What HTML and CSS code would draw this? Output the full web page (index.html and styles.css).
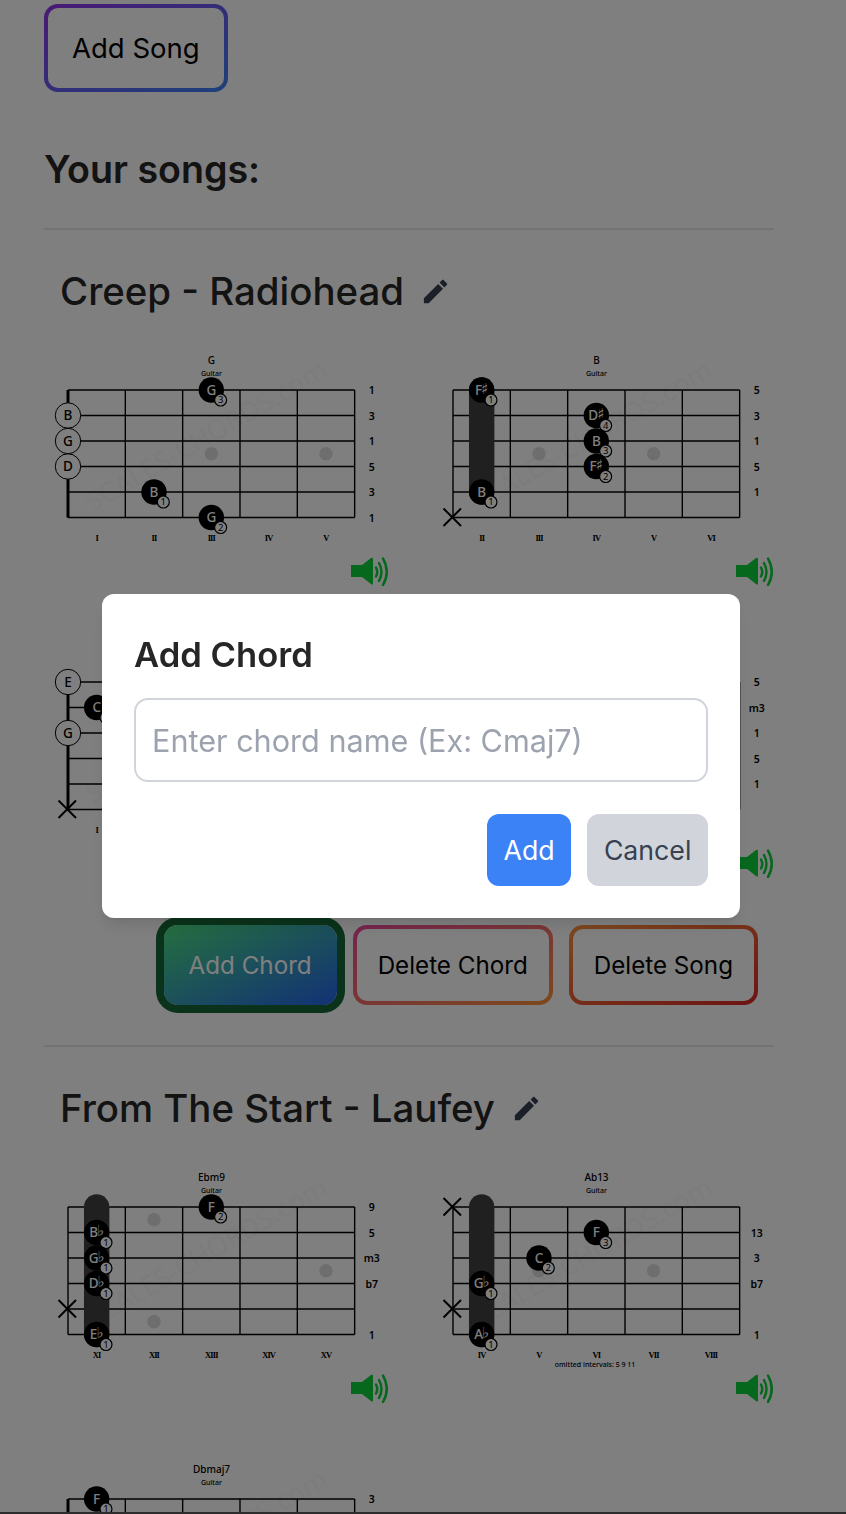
FILE: index.html
```html
<!DOCTYPE html>
<html lang="en">

<head>
    <meta charset="UTF-8">
    <meta name="viewport" content="width=device-width, initial-scale=1.0">
    <title>Chord Book</title>
    <link rel="stylesheet" href="styles.css">
</head>

<body>
    <main class="page">
        <a class="grad-btn add-song grad-purple" href="#"><span class="grad-inner">Add Song</span></a>
        <h1 class="songs-heading">Your songs:</h1>

        <section class="song">
            <hr class="divider">
            <div class="song-title">
                <h2>Creep - Radiohead</h2>
                <svg class="edit-icon" viewBox="0 0 24 24"><path d="M3 17.25V21h3.75L17.81 9.94l-3.75-3.75L3 17.25zM20.71 7.04c.39-.39.39-1.02 0-1.41l-2.34-2.34c-.39-.39-1.02-.39-1.41 0l-1.83 1.83 3.75 3.75 1.83-1.83z"/></svg>
            </div>
            <div class="chord-grid" data-song="creep"></div>
            <div class="song-actions">
                <a class="grad-btn grad-green is-active" href="#"><span class="grad-inner">Add Chord</span></a>
                <a class="grad-btn grad-pink" href="#"><span class="grad-inner">Delete Chord</span></a>
                <a class="grad-btn grad-orange" href="#"><span class="grad-inner">Delete Song</span></a>
            </div>
        </section>

        <section class="song">
            <hr class="divider">
            <div class="song-title">
                <h2>From The Start - Laufey</h2>
                <svg class="edit-icon" viewBox="0 0 24 24"><path d="M3 17.25V21h3.75L17.81 9.94l-3.75-3.75L3 17.25zM20.71 7.04c.39-.39.39-1.02 0-1.41l-2.34-2.34c-.39-.39-1.02-.39-1.41 0l-1.83 1.83 3.75 3.75 1.83-1.83z"/></svg>
            </div>
            <div class="chord-grid" data-song="start"></div>
        </section>
    </main>

    <div class="overlay">
        <form class="modal">
            <h3>Add Chord</h3>
            <input class="modal-input" type="text" placeholder="Enter chord name (Ex: Cmaj7)">
            <div class="modal-actions">
                <button class="btn-add" type="button">Add</button>
                <button class="btn-cancel" type="button">Cancel</button>
            </div>
        </form>
    </div>
    <div class="bottom-edge"></div>

    <script src="chords.js"></script>
</body>

</html>
```

FILE: styles.css
```css
* {
    padding: 0;
    margin: 0;
    box-sizing: border-box;
}

html,
body {
    height: 100%;
    overflow: hidden;
}

body {
    font-family: Inter, "Liberation Sans", sans-serif;
    color: #262626;
    background-color: #fff;
}

.page {
    width: 730px;
    margin-left: 44px;
    padding-top: 4px;
}

/* gradient outline buttons */
.grad-btn {
    display: inline-block;
    padding: 4px;
    border-radius: 14px;
    color: #000;
    text-decoration: none;
    font-size: 24.2px;
    line-height: 33px;
}

.grad-inner {
    display: block;
    padding: 20px 21px 19px;
    border-radius: 10px;
    background-color: #fff;
}

.grad-purple {
    background-image: linear-gradient(to bottom right, #9333ea, #3b82f6);
}

.grad-green {
    background-image: linear-gradient(to bottom right, #4ade80, #2563eb);
}

.grad-pink {
    background-image: linear-gradient(to bottom right, #ec4899, #fb923c);
}

.grad-orange {
    background-image: linear-gradient(to bottom right, #fb923c, #dc2626);
}

.is-active {
    box-shadow: 0 0 0 8px #166534;
    padding: 0;
    color: #fff;
}

.is-active .grad-inner {
    padding: 24px 25px 23px;
    background-color: transparent;
}

.add-song {
    font-size: 27.5px;
    line-height: 36px;
}

.add-song .grad-inner {
    padding: 22px 24px;
}

.songs-heading {
    font-size: 37.6px;
    line-height: 40px;
    font-weight: 600;
    margin-top: 58px;
    margin-bottom: 38px;
}

.divider {
    border: none;
    height: 2px;
    background-color: #e5e7eb;
}

.song-title {
    display: flex;
    align-items: center;
    gap: 16px;
    padding-left: 16px;
    margin-top: 41px;
}

.song-title h2 {
    font-size: 38.4px;
    line-height: 40px;
    font-weight: 500;
}

.edit-icon {
    width: 31px;
    height: 31px;
    fill: #374151;
}

.chord-grid {
    display: grid;
    grid-template-columns: 345px 345px;
    column-gap: 40px;
    row-gap: 50px;
    margin-top: 33px;
}

.chord {
    display: flex;
    flex-direction: column;
    align-items: flex-end;
}

.chord-svg {
    display: block;
    width: 345px;
    height: 212px;
}

.speaker {
    display: block;
    width: 38px;
    height: 30px;
}

.song-actions {
    display: flex;
    justify-content: flex-end;
    gap: 16px;
    padding-right: 16px;
    margin-top: 47px;
    margin-bottom: 40px;
}

/* chord diagram parts */
.grid-line {
    stroke: #000;
    stroke-width: 1.4;
}

.nut {
    stroke: #000;
    stroke-width: 3;
}

.inlay {
    fill: #dcdcdc;
}

.barre {
    fill: #404040;
}

.dot {
    fill: #000;
}

.dot-text {
    fill: #fff;
    font: 500 13.5px "Noto Sans", "DejaVu Sans", sans-serif;
    text-anchor: middle;
}

.accidental {
    font: 15px "DejaVu Sans", sans-serif;
}

.open-ring {
    fill: #fff;
    stroke: #000;
    stroke-width: 1;
}

.open-text {
    fill: #000;
    font: 500 13.5px "Noto Sans", "DejaVu Sans", sans-serif;
    text-anchor: middle;
}

.finger {
    fill: #fff;
    stroke: #000;
    stroke-width: 1.2;
}

.finger-text {
    fill: #000;
    font: 9.5px "Noto Sans", sans-serif;
    text-anchor: middle;
}

.mute {
    stroke: #000;
    stroke-width: 2;
}

.chord-name {
    fill: #000;
    font: 500 10px "Noto Sans", sans-serif;
    text-anchor: middle;
}

.chord-sub {
    fill: #000;
    font: 500 7px "Noto Sans", sans-serif;
    text-anchor: middle;
}

.interval {
    fill: #000;
    font: 600 10.5px "Noto Sans", sans-serif;
    text-anchor: middle;
}

.fret-num {
    fill: #000;
    font: 700 8.5px "Liberation Serif", serif;
    letter-spacing: -0.9px;
    text-anchor: middle;
}

.omitted {
    fill: #000;
    font: 500 7px "Noto Sans", sans-serif;
    text-anchor: middle;
}

.watermark {
    fill: #000;
    opacity: 0.025;
    font: 400 27px "Noto Sans", sans-serif;
    text-anchor: middle;
}

.speaker-body {
    fill: #0cd03a;
}

.speaker-wave {
    fill: none;
    stroke: #0cd03a;
    stroke-width: 2.5;
    stroke-linecap: round;
}

/* modal */
.overlay {
    position: fixed;
    top: 0;
    left: 0;
    right: 0;
    bottom: 0;
    display: flex;
    align-items: center;
    justify-content: center;
    padding-right: 4px;
    padding-bottom: 2px;
    background-color: rgba(0, 0, 0, 0.5);
}

.modal {
    width: 638px;
    height: 324px;
    padding: 32px;
    border-radius: 12px;
    background-color: #fff;
    box-shadow: 0 10px 15px -3px rgba(0, 0, 0, 0.1), 0 4px 6px -4px rgba(0, 0, 0, 0.1);
}

.modal h3 {
    font-size: 34.6px;
    line-height: 56px;
    font-weight: 600;
    margin-bottom: 16px;
}

.modal-input {
    display: block;
    width: 100%;
    height: 84px;
    padding: 0 16px;
    border: 2px solid #d1d5db;
    border-radius: 14px;
    font-family: inherit;
    font-size: 30.6px;
}

.modal-input::placeholder {
    color: #9ca3af;
}

.modal-actions {
    display: flex;
    justify-content: flex-end;
    gap: 16px;
    margin-top: 32px;
}

.modal-actions button {
    height: 72px;
    padding: 0 16.6px;
    border: none;
    border-radius: 12px;
    font-family: inherit;
    font-size: 26.7px;
}

.btn-add {
    background-color: #3b82f6;
    color: #fff;
}

.btn-cancel {
    background-color: #d1d5db;
    color: #374151;
}

.bottom-edge {
    position: fixed;
    left: 0;
    right: 0;
    bottom: 0;
    height: 2px;
    background-color: #2d2d2d;
}
```

FILE: chords.js
```js
// chord data, row 0 is the top line of the diagram
const songs = {
    creep: [
        {
            name: "G", start: 1, nut: true, labels: ["1", "3", "1", "5", "3", "1"],
            open: [[1, "B"], [2, "G"], [3, "D"]], mute: [],
            dots: [[0, 2, "G", 3], [4, 1, "B", 1], [5, 2, "G", 2]]
        },
        {
            name: "B", start: 2, labels: ["5", "3", "1", "5", "1", ""],
            open: [], mute: [5], barre: [0, 4, 0],
            dots: [[0, 0, "F♯", 1], [1, 2, "D♯", 4], [2, 2, "B", 3], [3, 2, "F♯", 2], [4, 0, "B", 1]]
        },
        {
            name: "C", start: 1, nut: true, labels: ["3", "1", "5", "3", "1", ""],
            open: [[0, "E"], [2, "G"]], mute: [5],
            dots: [[1, 0, "C", 1], [3, 1, "E", 2], [4, 2, "C", 3]]
        },
        {
            name: "Cm", start: 3, labels: ["5", "m3", "1", "5", "1", ""],
            open: [], mute: [5], barre: [0, 4, 0],
            dots: [[0, 0, "G", 1], [1, 1, "E♭", 2], [2, 2, "C", 4], [3, 2, "G", 3], [4, 0, "C", 1]]
        }
    ],
    start: [
        {
            name: "Ebm9", start: 11, labels: ["9", "5", "m3", "b7", "", "1"],
            open: [], mute: [4], barre: [0, 5, 0],
            dots: [[0, 2, "F", 2], [1, 0, "B♭", 1], [2, 0, "G♭", 1], [3, 0, "D♭", 1], [5, 0, "E♭", 1]]
        },
        {
            name: "Ab13", start: 4, labels: ["", "13", "3", "b7", "", "1"],
            open: [], mute: [0, 4], barre: [0, 5, 0], omitted: "omitted intervals: 5 9 11",
            dots: [[1, 2, "F", 3], [2, 1, "C", 2], [3, 0, "G♭", 1], [5, 0, "A♭", 1]]
        },
        {
            name: "Dbmaj7", start: 1, nut: true, labels: ["3", "", "", "", "", ""],
            open: [], mute: [], dots: [[0, 0, "F", 1]]
        }
    ]
};

const ROMAN = ["", "I", "II", "III", "IV", "V", "VI", "VII", "VIII", "IX", "X", "XI", "XII", "XIII", "XIV", "XV"];
const LEFT = 24, TOP = 46, FRET_W = 57.33, ROW_H = 25.5, DOT_R = 12.7;

function el(parent, tag, attrs, text) {
    let node = document.createElementNS("http://www.w3.org/2000/svg", tag);
    for (let key in attrs) {
        node.setAttribute(key, attrs[key]);
    }
    if (text) node.textContent = text;
    parent.appendChild(node);
    return node;
}

function rowY(r) {
    return TOP + r * ROW_H;
}

function fretX(f) {
    return LEFT + (f + 0.5) * FRET_W;
}

function drawInlays(svg, start) {
    for (let f = 0; f < 5; f++) {
        let fret = start + f;
        if (fret == 12) {
            el(svg, "circle", { class: "inlay", cx: fretX(f), cy: rowY(0.5), r: 6.7 });
            el(svg, "circle", { class: "inlay", cx: fretX(f), cy: rowY(4.5), r: 6.7 });
        } else if ([3, 5, 7, 9, 15].includes(fret)) {
            el(svg, "circle", { class: "inlay", cx: fretX(f), cy: rowY(2.5), r: 6.7 });
        }
    }
}

function drawGrid(svg, nut) {
    for (let r = 0; r < 6; r++) {
        el(svg, "line", { class: "grid-line", x1: LEFT, x2: LEFT + 5 * FRET_W, y1: rowY(r), y2: rowY(r) });
    }
    for (let f = 0; f <= 5; f++) {
        el(svg, "line", { class: "grid-line", x1: LEFT + f * FRET_W, x2: LEFT + f * FRET_W, y1: rowY(0), y2: rowY(5) });
    }
    if (nut) {
        el(svg, "line", { class: "nut", x1: LEFT, x2: LEFT, y1: rowY(0), y2: rowY(5) });
    }
}

function drawDot(svg, d) {
    let x = fretX(d[1]), y = rowY(d[0]);
    el(svg, "circle", { class: "dot", cx: x, cy: y, r: DOT_R });
    let label = el(svg, "text", { class: "dot-text", x: x, y: y + 4.5 }, d[2][0]);
    // sharp or flat sits a bit bigger, tucked against the letter
    if (d[2].length > 1) {
        el(label, "tspan", { class: "accidental", dx: -1, dy: -1 }, d[2][1]);
    }
    el(svg, "circle", { class: "finger", cx: x + 9.3, cy: y + 10, r: 6 });
    el(svg, "text", { class: "finger-text", x: x + 9.3, y: y + 13.4 }, String(d[3]));
}

function drawChord(chord) {
    let box = document.createElement("div");
    box.className = "chord";

    let svg = el(box, "svg", { class: "chord-svg", viewBox: "0 0 345 212" });
    el(svg, "text", { class: "watermark", transform: "translate(167 100) rotate(-30)" }, "SCALES-CHORDS.com");
    el(svg, "text", { class: "chord-name", x: 167.5, y: 20 }, chord.name);
    el(svg, "text", { class: "chord-sub", x: 167.5, y: 31.5 }, "Guitar");

    drawInlays(svg, chord.start);
    drawGrid(svg, chord.nut);

    if (chord.barre) {
        let top = rowY(chord.barre[0]) - DOT_R, bottom = rowY(chord.barre[1]) + DOT_R;
        el(svg, "rect", {
            class: "barre", x: fretX(chord.barre[2]) - DOT_R, y: top,
            width: DOT_R * 2, height: bottom - top, rx: DOT_R
        });
    }

    chord.open.forEach((o) => {
        el(svg, "circle", { class: "open-ring", cx: LEFT, cy: rowY(o[0]), r: DOT_R });
        el(svg, "text", { class: "open-text", x: LEFT, y: rowY(o[0]) + 4.8 }, o[1]);
    });

    chord.mute.forEach((r) => {
        let y = rowY(r);
        el(svg, "line", { class: "mute", x1: LEFT - 9.5, x2: LEFT + 8, y1: y - 9, y2: y + 8.5 });
        el(svg, "line", { class: "mute", x1: LEFT - 9.5, x2: LEFT + 8, y1: y + 8.5, y2: y - 9 });
    });

    chord.dots.forEach((d) => drawDot(svg, d));

    chord.labels.forEach((label, r) => {
        el(svg, "text", { class: "interval", x: 327.7, y: rowY(r) + 4 }, label);
    });

    for (let f = 0; f < 5; f++) {
        el(svg, "text", { class: "fret-num", x: fretX(f), y: 196.5 }, ROMAN[chord.start + f]);
    }

    if (chord.omitted) {
        el(svg, "text", { class: "omitted", x: 166, y: 205.5 }, chord.omitted);
    }

    // little green speaker under the diagram
    let speaker = el(box, "svg", { class: "speaker", viewBox: "0 0 38 30" });
    el(speaker, "path", { class: "speaker-body", d: "M0 9H11L20 2Q22 1 22 3V27Q22 30 20 28L11 21H0Z" });
    el(speaker, "path", { class: "speaker-wave", d: "M25 11.500Q27.500 16 25 20.500" });
    el(speaker, "path", { class: "speaker-wave", d: "M28 7Q33 16 28 25" });
    el(speaker, "path", { class: "speaker-wave", d: "M32 2.500Q39.500 16 32 29" });
    return box;
}

document.querySelectorAll(".chord-grid").forEach((grid) => {
    songs[grid.dataset.song].forEach((chord) => grid.appendChild(drawChord(chord)));
});
```
